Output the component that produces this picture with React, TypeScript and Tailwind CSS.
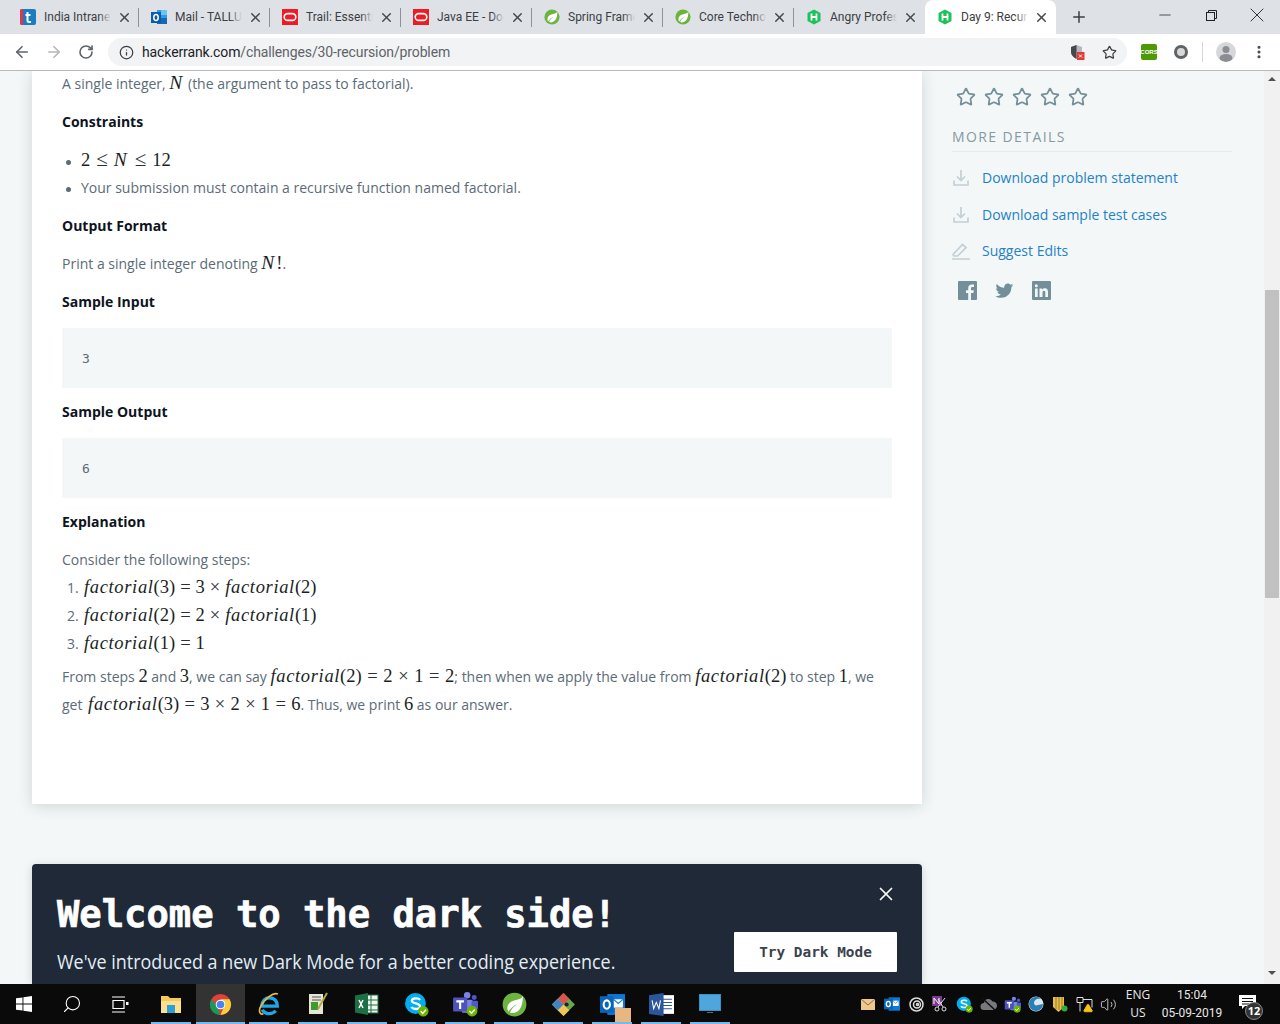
import React from "react";
import { ArrowLeft, ArrowRight, RotateCw, Info, Star, MoreVertical, Plus, X, Minus, Search, Volume2, AlertTriangle } from "lucide-react";

const Hex = ({ size = 16 }: { size?: number }) => (
  <svg width={size} height={size} viewBox="0 0 16 16">
    <path d="M8 0.5 14.5 4v8L8 15.5 1.5 12V4z" fill="#1ec25c" />
    <path d="M5.5 4.5v7M10.5 4.5v7M5.5 8h5" stroke="#fff" strokeWidth="1.8" fill="none" />
  </svg>
);
const Oracle = () => (
  <svg width="16" height="16" viewBox="0 0 16 16">
    <rect width="16" height="16" fill="#ed1c24" />
    <rect x="2.2" y="4.6" width="11.6" height="6.8" rx="3.4" fill="none" stroke="#fff" strokeWidth="1.6" />
  </svg>
);
const SpringIcon = ({ size = 16 }: { size?: number }) => (
  <svg width={size} height={size} viewBox="0 0 16 16">
    <circle cx="8" cy="8" r="7.6" fill="#6db33f" />
    <path d="M13.4 2.600C12 5.500 8 4.500 5 6.800 2.800 8.800 3.200 11.200 4.200 12.600c1.200-2.300 3.300-4 5.800-5-2.400 1.400-4 3.200-4.900 5.500 3.400 1.200 8.300-.6 8.300-10.500z" fill="#fff" />
  </svg>
);
const TIcon = () => (
  <svg width="16" height="16" viewBox="0 0 16 16">
    <rect width="16" height="16" rx="2" fill="#1b7cc0" />
    <path d="M0 2a2 2 0 0 1 2-2h1v16H2a2 2 0 0 1-2-2z" fill="#e0344f" />
    <path d="M7.5 3v8.5q0 1.5 1.5 1.5h2M5.5 6h5" stroke="#fff" strokeWidth="2" fill="none" />
  </svg>
);
const OutlookIcon = ({ size = 16 }: { size?: number }) => (
  <svg width={size} height={size} viewBox="0 0 16 16">
    <rect x="6" y="1" width="10" height="11" fill="#2e9be6" />
    <rect x="10" y="1" width="6" height="5" fill="#6fc3f2" />
    <rect x="6" y="9" width="10" height="6" fill="#1668b5" />
    <rect x="0" y="3" width="10" height="11" fill="#0a5cab" />
    <ellipse cx="5" cy="8.5" rx="2.2" ry="3" fill="none" stroke="#fff" strokeWidth="1.5" />
  </svg>
);

const tabs = [
  { t: "India Intranet", i: <TIcon /> },
  { t: "Mail - TALLURI", i: <OutlookIcon /> },
  { t: "Trail: Essential", i: <Oracle /> },
  { t: "Java EE - Docs", i: <Oracle /> },
  { t: "Spring Framework", i: <SpringIcon /> },
  { t: "Core Technologies", i: <SpringIcon /> },
  { t: "Angry Professor", i: <Hex /> },
];

function Tab({ t, i, active, sep }: { t: string; i: React.ReactNode; active?: boolean; sep?: boolean }) {
  return (
    <div className={`relative flex h-[34px] w-[131px] shrink-0 items-center pl-[12px] ${active ? "rounded-t-lg bg-white" : ""}`}>
      <div className="flex h-4 w-4 shrink-0 items-center justify-center">{i}</div>
      <div className="relative ml-2 w-[67px] overflow-hidden whitespace-nowrap text-[12px] text-[#3c4043]">
        {t}
        <div className={`absolute inset-y-0 right-0 w-[12px] bg-gradient-to-r from-transparent ${active ? "to-white" : "to-[#dee1e6]"}`} />
      </div>
      <X size={15} strokeWidth={2.3} className="ml-[5.500px] shrink-0 text-[#45484c]" />
      {sep && <div className="absolute right-0 top-[8px] h-[19px] w-px bg-[#8e9196]" />}
    </div>
  );
}

function TabBar() {
  return (
    <div className="flex h-[34px] items-center bg-[#dee1e6] pl-[8px] font-['Roboto']">
      {tabs.map((x, n) => (
        <Tab key={x.t} t={x.t} i={x.i} sep={n < 6} />
      ))}
      <Tab t="Day 9: Recursion" i={<Hex />} active />
      <Plus size={18} strokeWidth={2} className="ml-[14px] text-[#3c4043]" />
      <div className="ml-auto flex h-[34px] items-start text-[#202124]">
        <div className="flex h-[30px] w-[46px] items-center justify-center"><Minus size={18} strokeWidth={1} /></div>
        <div className="flex h-[30px] w-[46px] items-center justify-center">
          <svg width="11" height="11" viewBox="0 0 11 11" fill="none" stroke="#202124"><rect x="0.5" y="2.5" width="8" height="8" /><path d="M2.5 2.5v-2h8v8h-2" /></svg>
        </div>
        <div className="flex h-[30px] w-[46px] items-center justify-center"><X size={24} strokeWidth={0.9} /></div>
      </div>
    </div>
  );
}

function ToolBar() {
  return (
    <div className="flex h-[37px] items-center border-b border-[#b8b9ba] bg-white">
      <div className="flex w-[108px] shrink-0 items-center pl-[13px] text-[#5f6368]">
        <ArrowLeft size={18} strokeWidth={2.2} />
        <ArrowRight size={18} strokeWidth={2.2} className="ml-[14px] text-[#b4b6b9]" />
        <RotateCw size={16} strokeWidth={2.4} className="ml-[15px]" />
      </div>
      <div className="flex h-[28px] w-[1019px] shrink-0 items-center rounded-full bg-[#f1f3f4] pl-[11px] pr-[10px]">
        <Info size={15} strokeWidth={2} className="text-[#3c4043]" />
        <div className="ml-[8px] mt-px font-['Roboto'] text-[14px] tracking-[-0.12px] text-[#5f6368]">
          <span className="text-[#202124]">hackerrank.com</span>/challenges/30-recursion/problem
        </div>
        <svg className="ml-auto" width="15" height="16" viewBox="0 0 15 16">
          <path d="M6.5 1 12 3v5c0 3-2.5 5.5-5.5 7C3.500 13.500 1 11 1 8V3z" fill="#b5b7ba" />
          <path d="M6.5 1v14C3.500 13.500 1 11 1 8V3z" fill="#45484c" />
          <rect x="7" y="8" width="7.500" height="8" fill="#e53935" />
          <path d="M9 10.500l3 3M12 10.500l-3 3" stroke="#fff" strokeWidth="1" />
        </svg>
        <Star size={15} strokeWidth={2} className="ml-[17px] text-[#3c4043]" />
      </div>
      <div className="ml-[14px] flex h-[16px] w-[16px] items-center justify-center rounded-[2px] bg-[#4d9a06] font-['Liberation_Sans'] text-[6px] font-bold text-white">CORS</div>
      <div className="ml-[17px] flex h-[14px] w-[14px] items-center justify-center rounded-full border-[3px] border-[#5f6368] bg-[#d8d8d8]" />
      <div className="ml-[14px] h-[20px] w-px bg-[#d5d7da]" />
      <div className="ml-[13px] flex h-[20px] w-[20px] items-end justify-center overflow-hidden rounded-full bg-[#d5d7da]">
        <svg width="20" height="20" viewBox="0 0 20 20"><circle cx="10" cy="7.500" r="3.500" fill="#8a8d91" /><ellipse cx="10" cy="16" rx="6.500" ry="4" fill="#8a8d91" /></svg>
      </div>
      <MoreVertical size={16} strokeWidth={2.6} className="ml-[15px] text-[#45484c]" />
    </div>
  );
}

const Fn = ({ children }: { children: React.ReactNode }) => (
  <span className="font-['Liberation_Serif'] text-[18.500px] italic leading-none tracking-[0.65px] text-[#1a1f25]">{children}</span>
);
const BigN = () => (
  <span className="font-['Liberation_Serif'] text-[19.500px] italic leading-none tracking-[2px] text-[#1a1f25]">N</span>
);
const Rm = ({ children }: { children: React.ReactNode }) => (
  <span className="font-['Liberation_Serif'] text-[18.500px] leading-none text-[#1a1f25]">{children}</span>
);
const Op = ({ children }: { children: React.ReactNode }) => (
  <span className="mx-[5px] font-['Liberation_Serif'] text-[18.500px] leading-none text-[#2a3037]">{children}</span>
);
const OpW = ({ children }: { children: React.ReactNode }) => (
  <span className="mx-[5.600px] font-['Liberation_Serif'] text-[18.500px] leading-none text-[#2a3037]">{children}</span>
);
const OpN = ({ children }: { children: React.ReactNode }) => (
  <span className="mx-[5.300px] font-['Liberation_Serif'] text-[18.500px] leading-none text-[#2a3037]">{children}</span>
);
const Le = () => (
  <span className="mx-[6px] font-['Liberation_Serif'] text-[21px] leading-none text-[#2a3037]">≤</span>
);
const Call = ({ n }: { n: string }) => (
  <>
    <Fn>factorial</Fn>
    <Rm>({n})</Rm>
  </>
);

const Head = ({ children, cls }: { children: React.ReactNode; cls: string }) => (
  <div className={`h-[28px] pt-px text-[14px] font-bold leading-[26px] text-[#0e141e] ${cls}`}>{children}</div>
);
const Code = ({ children }: { children: React.ReactNode }) => (
  <div className="mt-[12px] flex h-[60px] items-center bg-[#f3f7f7] pl-[20px] pt-[2px] font-['DejaVu_Sans_Mono'] text-[13px] text-[#5b6b78]">{children}</div>
);
const Bullet = () => (
  <span className="ml-[4px] mr-[10px] inline-block h-[5px] w-[5px] rounded-full bg-[#5b6b78] align-middle" />
);
const Num = ({ children }: { children: React.ReactNode }) => (
  <span className="inline-block w-[17px]">{children}</span>
);

function Card() {
  return (
    <div className="h-[733px] w-[890px] shrink-0 bg-white px-[30px] font-['Open_Sans'] text-[14px] text-[#5b6b78] shadow-[0_2px_14px_rgba(20,40,50,0.16)]">
      <div className="h-[26px] whitespace-pre leading-[25px]">
        A single integer, <BigN /> (the argument to pass to factorial).
      </div>
      <Head cls="mt-[11px]">Constraints</Head>
      <ul className="mt-[10px]">
        <li className="h-[28px] whitespace-pre pt-px leading-[28px]">
          <Bullet /><Rm>2</Rm><Le /><BigN /><Le /><Rm>12</Rm>
        </li>
        <li className="h-[28px] pt-px leading-[26px]">
          <Bullet />Your submission must contain a recursive function named factorial.
        </li>
      </ul>
      <Head cls="mt-[10px]">Output Format</Head>
      <div className="mt-[10px] h-[28px] whitespace-pre pt-px leading-[26px]">
        Print a single integer denoting <BigN /><Rm>!</Rm>.
      </div>
      <Head cls="mt-[10px]">Sample Input</Head>
      <Code>3</Code>
      <Head cls="mt-[10px]">Sample Output</Head>
      <Code>6</Code>
      <Head cls="mt-[10px]">Explanation</Head>
      <div className="mt-[10px] h-[28px] pt-px leading-[26px]">Consider the following steps:</div>
      <ol>
        <li className="h-[28px] whitespace-pre pl-[5px] leading-[28px]">
          <Num>1.</Num><Call n="3" /><Op>=</Op><Rm>3</Rm><Op>×</Op><Call n="2" />
        </li>
        <li className="h-[28px] whitespace-pre pl-[5px] leading-[28px]">
          <Num>2.</Num><Call n="2" /><Op>=</Op><Rm>2</Rm><Op>×</Op><Call n="1" />
        </li>
        <li className="h-[28px] whitespace-pre pl-[5px] leading-[28px]">
          <Num>3.</Num><Call n="1" /><Op>=</Op><Rm>1</Rm>
        </li>
      </ol>
      <div className="mt-[5px] h-[28px] whitespace-pre pt-px leading-[26px]">
        From steps <Rm>2</Rm> and <Rm>3</Rm>, we can say <Call n="2" /><OpW>=</OpW><Rm>2</Rm><OpW>×</OpW><Rm>1</Rm><OpW>=</OpW><Rm>2</Rm>; then when we apply the value from <Call n="2" /> to step <Rm>1</Rm>, we
      </div>
      <div className="h-[28px] whitespace-pre pt-px leading-[26px]">
        get <span className="ml-[2px]"><Call n="3" /></span><OpN>=</OpN><Rm>3</Rm><OpN>×</OpN><Rm>2</Rm><OpN>×</OpN><Rm>1</Rm><OpN>=</OpN><Rm>6</Rm>. Thus, we print <Rm>6</Rm> as our answer.
      </div>
    </div>
  );
}

const DownloadIcon = () => (
  <svg width="18" height="18" viewBox="0 0 18 18" fill="none" stroke="#c3d0d5" strokeWidth="1.700">
    <path d="M9 1v10M5 7.500l4 4 4-4M2 11.500v4.500h14v-4.500" />
  </svg>
);

function Side() {
  const link = "ml-[12px] pb-[2px] text-[14px] text-[#1f82c9]";
  return (
    <div className="ml-[30px] w-[280px] shrink-0 pt-[16px] font-['Open_Sans']">
      <div className="flex h-[20px] gap-[8px] pl-[3.500px]">
        {[0, 1, 2, 3, 4].map((n) => (
          <Star key={n} size={20} strokeWidth={2.1} className="text-[#738f99]" />
        ))}
      </div>
      <div className="mt-[20px] border-b border-[#e6ecee] pb-[4px] text-[14px] leading-[20px] tracking-[1.4px] text-[#8799a3]">MORE DETAILS</div>
      <div className="mt-[16px] flex h-[20px] items-center"><DownloadIcon /><span className={link}>Download problem statement</span></div>
      <div className="mt-[17px] flex h-[20px] items-center"><DownloadIcon /><span className={link}>Download sample test cases</span></div>
      <div className="mt-[16px] flex h-[20px] items-center">
        <svg width="18" height="18" viewBox="0 0 18 18" fill="none" stroke="#c3d0d5" strokeWidth="1.700"><path d="M1 12.500 10.500 2.500l3.500 3-8.500 8.500H2zM0 17h18" /></svg>
        <span className={link}>Suggest Edits</span>
      </div>
      <div className="mt-[19px] flex h-[20px] items-center gap-[18px] pl-[6px]">
        <svg width="19" height="19" viewBox="0 0 19 19"><rect width="19" height="19" rx="1" fill="#738f99" /><path d="M13 19v-7h2.400l.4-2.800H13V7.500c0-.9.300-1.400 1.500-1.400H16V3.600c-.4 0-1.200-.1-2.100-.1-2.200 0-3.700 1.300-3.700 3.700v2H8V12h2.200v7z" fill="#f3f7f7" /></svg>
        <svg width="19" height="19" viewBox="0 0 24 24"><path d="M23 5.300c-.8.400-1.700.6-2.600.7.900-.6 1.700-1.400 2-2.500-.9.500-1.900.9-2.900 1.100C18.700 3.700 17.500 3 16.200 3c-2.500 0-4.600 2.100-4.600 4.600 0 .4 0 .7.100 1C7.900 8.400 4.500 6.600 2.200 3.800c-.4.700-.6 1.500-.6 2.300 0 1.600.8 3 2 3.800-.7 0-1.400-.2-2.100-.6v.1c0 2.200 1.600 4.100 3.700 4.500-.7.200-1.400.2-2.100.1.600 1.800 2.300 3.200 4.300 3.200-1.600 1.200-3.600 2-5.700 2H.5c2 1.300 4.500 2.100 7.100 2.100 8.500 0 13.100-7 13.100-13.100v-.6c.9-.6 1.700-1.400 2.300-2.300z" fill="#738f99" /></svg>
        <svg width="19" height="19" viewBox="0 0 19 19"><rect width="19" height="19" rx="1" fill="#738f99" /><path d="M3 7.500h2.700V16H3zM4.300 3.200a1.500 1.500 0 1 1 0 3.100 1.500 1.500 0 0 1 0-3.100zM7.500 7.500h2.600v1.200c.4-.7 1.300-1.400 2.600-1.400 2.800 0 3.300 1.800 3.300 4.200V16h-2.700v-4c0-1 0-2.200-1.300-2.200s-1.500 1-1.500 2.100V16H7.500z" fill="#f3f7f7" /></svg>
      </div>
    </div>
  );
}

function Banner() {
  return (
    <div className="relative mt-[60px] flex h-[160px] w-[890px] justify-between rounded-t-[4px] bg-[#1f2937] pl-[25px] pr-[25px] shadow-[0_2px_10px_rgba(0,0,0,0.15)]">
      <div className="pt-[26px]">
        <div className="font-['DejaVu_Sans_Mono'] text-[37.150px] font-bold leading-[50px] text-white [-webkit-text-stroke:0.7px_white]">Welcome to the dark side!</div>
        <div className="mt-[8px] origin-left scale-x-[0.897] whitespace-nowrap font-['Open_Sans'] text-[20px] leading-[28px] text-[#e3edf5]">We've introduced a new Dark Mode for a better coding experience.</div>
      </div>
      <div className="pt-[68px]">
        <div className="flex h-[40px] w-[163px] items-center justify-center rounded-[1px] bg-white pt-[2px] font-['DejaVu_Sans_Mono'] text-[14.400px] font-bold text-[#39424e]">Try Dark Mode</div>
      </div>
      <X size={22} strokeWidth={1.9} className="absolute right-[25px] top-[19px] text-white" />
    </div>
  );
}

function Scrollbar() {
  return (
    <div className="ml-auto flex h-full w-[16px] shrink-0 flex-col items-center bg-[#f1f1f1]">
      <div className="mt-[6px] h-0 w-0 border-x-[4px] border-b-[4px] border-x-transparent border-b-[#505050]" />
      <div className="mt-[209px] h-[308px] w-[14px] bg-[#c1c1c1]" />
      <div className="mt-[373px] h-0 w-0 border-x-[4px] border-t-[4px] border-x-transparent border-t-[#505050]" />
    </div>
  );
}

const Slot = ({ children, run, active, w = "w-[49px]" }: { children: React.ReactNode; run?: boolean; active?: boolean; w?: string }) => (
  <div className={`relative flex h-[40px] shrink-0 items-center justify-center ${w} ${active ? "bg-[#333333]" : ""}`}>
    {children}
    {run && <div className={`absolute bottom-0 h-[2px] bg-[#76b9ed] ${active ? "inset-x-0" : "inset-x-[4.500px]"}`} />}
  </div>
);

const TrayOutlook = ({ size }: { size: number }) => (
  <svg width={size} height={size} viewBox="0 0 24 24">
    <rect x="7" y="2" width="17" height="20" fill="#0f78d4" />
    <rect x="13" y="7" width="9" height="8" fill="#fff" />
    <path d="M13 7l4.500 4L22 7" stroke="#0f78d4" fill="none" />
    <rect x="0" y="4" width="13" height="16" fill="#0a64b8" />
    <ellipse cx="6.500" cy="12" rx="3" ry="4" fill="none" stroke="#fff" strokeWidth="2" />
  </svg>
);
const SkypeIcon = ({ size }: { size: number }) => (
  <svg width={size} height={size} viewBox="0 0 24 24">
    <circle cx="11" cy="11" r="10" fill="#00aff0" />
    <path d="M15.500 7.500C14 5.500 7.500 5.500 7.500 8.500c0 3.500 8 1.500 8 5.500 0 3-6.500 3-8.500.5" stroke="#fff" strokeWidth="2.200" fill="none" />
    <circle cx="18.500" cy="18.500" r="5" fill="#6bb700" />
    <path d="M16 18.500l2 2 3-3.500" stroke="#fff" strokeWidth="1.400" fill="none" />
  </svg>
);
const TeamsIcon = ({ size }: { size: number }) => (
  <svg width={size} height={size} viewBox="0 0 24 24">
    <circle cx="14" cy="4" r="3" fill="#7b83eb" />
    <circle cx="20.500" cy="6" r="2.300" fill="#5059c9" />
    <rect x="9" y="8" width="10" height="12" rx="1" fill="#7b83eb" />
    <rect x="18" y="9" width="6" height="8" rx="1" fill="#5059c9" />
    <rect x="1" y="6" width="13" height="13" rx="1" fill="#4b53bc" />
    <path d="M4 9.500h7M7.500 9.500v7" stroke="#fff" strokeWidth="2" />
    <circle cx="18.500" cy="18.500" r="5" fill="#6bb700" />
    <path d="M16 18.500l2 2 3-3.500" stroke="#fff" strokeWidth="1.400" fill="none" />
  </svg>
);

function Taskbar() {
  return (
    <div className="flex h-[40px] items-center bg-[#0a0a0a]">
      <div className="flex h-[40px] w-[48px] items-center justify-center">
        <svg width="16" height="16" viewBox="0 0 16 16" fill="#fff"><path d="M0 2.300 6.500 1.400V7.500H0zM7.400 1.300 16 0v7.500H7.400zM0 8.400h6.500v6.200L0 13.700zM7.400 8.400H16V16l-8.600-1.200z" /></svg>
      </div>
      <div className="flex h-[40px] w-[48px] items-center justify-center"><Search size={20} strokeWidth={1.300} className="-scale-x-100 text-white" /></div>
      <div className="flex h-[40px] w-[48px] items-center justify-center">
        <svg width="17" height="17" viewBox="0 0 17 17" fill="none" stroke="#fff" strokeWidth="1.200"><path d="M0 1h13M0 16h13M1 4.500h11v8H1z" /><rect x="14" y="6" width="2.500" height="3" fill="#fff" stroke="none" /></svg>
      </div>
      <div className="w-[2.500px]" />
      <Slot run>
        <svg width="22" height="22" viewBox="0 0 22 22"><path d="M1 3h7l2 2h11v15H1z" fill="#f5c95a" /><rect x="1" y="8" width="20" height="12" fill="#fbe18f" /><rect x="7" y="12" width="8" height="8" fill="#2b9fd8" /></svg>
      </Slot>
      <Slot run active>
        <svg width="23" height="23" viewBox="0 0 24 24">
          <circle cx="12" cy="12" r="11" fill="#db4437" />
          <path d="M12 23A11 11 0 0 1 2.500 6.500L8 14z" fill="#0f9d58" />
          <path d="M12 23a11 11 0 0 0 9.500-16.500H12l4 7z" fill="#ffcd40" />
          <circle cx="12" cy="12" r="5" fill="#fff" /><circle cx="12" cy="12" r="4" fill="#4285f4" />
        </svg>
      </Slot>
      <Slot run>
        <svg width="25" height="25" viewBox="0 0 24 24" fill="none">
          <path d="M4.500 13.500h15c.3-4.500-3-8-7.500-8-4 0-7 3-7.500 8zM5 17c2 4 9 5.500 13 1" stroke="#1ea7e8" strokeWidth="3.200" />
          <path d="M20 2C16 0 7 6 3 15c-1.500 4 0 7 3 6" stroke="#f2b632" strokeWidth="1.600" />
        </svg>
      </Slot>
      <Slot run>
        <svg width="22" height="24" viewBox="0 0 22 24"><path d="M2 2h14v20H2z" fill="#e6e6d8" /><rect x="4" y="10" width="7" height="8" fill="#3f9b2f" /><path d="M5 5h9M5 8h9" stroke="#555" /><path d="M11 17 20 1" stroke="#b5a642" strokeWidth="2" /></svg>
      </Slot>
      <Slot run>
        <svg width="24" height="24" viewBox="0 0 24 24"><rect x="10" y="3" width="13" height="18" fill="#eef5ee" stroke="#1d7044" /><path d="M10 8h13M10 13h13M10 18h13M16 3v18" stroke="#1d7044" /><path d="M0 3.500 13 1v22L0 20.500z" fill="#1d7044" /><path d="M4 8l4 8M8 8l-4 8" stroke="#fff" strokeWidth="1.500" /></svg>
      </Slot>
      <Slot run><SkypeIcon size={25} /></Slot>
      <Slot run><TeamsIcon size={26} /></Slot>
      <Slot run><SpringIcon size={25} /></Slot>
      <Slot run>
        <svg width="25" height="25" viewBox="0 0 24 24"><path d="M12 1 23 12 12 23 1 12z" fill="#6aa84f" /><path d="M12 23 1 12l5.500-5.500L17.500 17.500z" fill="#f0c555" /><path d="M6.500 6.500 1 12l5.500 5.500L12 12z" fill="#3d85c6" /><path d="M12 1 6.500 6.500 12 12l5.500-5.500z" fill="#d9534f" /><circle cx="15" cy="12" r="2" fill="#222" /></svg>
      </Slot>
      <Slot run>
        <div className="relative"><TrayOutlook size={25} /><div className="absolute -bottom-[5px] -right-[6px] h-[14px] w-[16px] bg-[#e8b681]" /></div>
      </Slot>
      <Slot run>
        <svg width="25" height="25" viewBox="0 0 24 24"><rect x="11" y="3" width="13" height="18" fill="#fff" /><path d="M13 7h9M13 10h9M13 13h9M13 16h9" stroke="#2b579a" /><path d="M0 3 14 1v22L0 21z" fill="#2b579a" /><path d="M3 8l1.500 8L7 10l2.500 6L11 8" stroke="#fff" fill="none" /></svg>
      </Slot>
      <Slot run>
        <svg width="22" height="20" viewBox="0 0 22 20"><rect width="22" height="17" fill="#3d8fc7" /><rect x="1" y="1" width="20" height="15" fill="#4ea6dd" /><rect x="8" y="18" width="6" height="1" fill="#666" /></svg>
      </Slot>

      <div className="ml-auto flex h-[40px] items-center pr-[13px]">
        <Slot w="w-[24px]"><svg width="14" height="11" viewBox="0 0 14 11"><rect width="14" height="11" fill="#efc88e" /><path d="M0 0l7 6 7-6" stroke="#8a6c3c" fill="none" /></svg></Slot>
        <Slot w="w-[24px]"><TrayOutlook size={16} /></Slot>
        <Slot w="w-[24px]"><svg width="15" height="15" viewBox="0 0 15 15" fill="none" stroke="#ddd" strokeWidth="1.500"><circle cx="7.500" cy="7.500" r="6.500" /><circle cx="8" cy="7.500" r="3.500" /><circle cx="8.500" cy="7.500" r="1" /></svg></Slot>
        <Slot w="w-[24px]"><svg width="16" height="16" viewBox="0 0 16 16"><rect width="10" height="10" fill="#7a3b8f" /><path d="M2 8V2l5 6V2" stroke="#fff" fill="none" /><circle cx="5" cy="13" r="2" fill="none" stroke="#ddd" /><circle cx="12" cy="13" r="2" fill="none" stroke="#ddd" /><path d="M6 11 13 2M11 11 6 3" stroke="#ddd" /></svg></Slot>
        <Slot w="w-[24px]"><SkypeIcon size={17} /></Slot>
        <Slot w="w-[24px]"><svg width="17" height="14" viewBox="0 0 17 14"><path d="M4 13a3.500 3.500 0 0 1 0-7 4.500 4.500 0 0 1 8.500-1.500A4 4 0 0 1 13 13z" fill="#77797c" /><path d="M2 1l13 12" stroke="#111" strokeWidth="1.500" /></svg></Slot>
        <Slot w="w-[24px]"><TeamsIcon size={17} /></Slot>
        <Slot w="w-[24px]"><svg width="16" height="16" viewBox="0 0 16 16"><circle cx="8" cy="8" r="7.500" fill="#d9e7ef" /><path d="M1 8a7 7 0 0 1 12-5c-4-1-7 1-7 4 0 2 2 3 4 2 2 0 3-1 5-1a7 7 0 0 1-14 0z" fill="#2a7fb5" /></svg></Slot>
        <Slot w="w-[24px]"><svg width="16" height="17" viewBox="0 0 16 17"><path d="M1 1h11v10l-5.500 5L1 11z" fill="#e7c04a" /><path d="M4 1v12M7 1v13M10 1v11" stroke="#9a7a22" /><circle cx="12.500" cy="12.500" r="3" fill="#2fae3c" /></svg></Slot>
        <Slot w="w-[24px]"><div className="relative"><svg width="17" height="15" viewBox="0 0 17 15" fill="none" stroke="#ddd"><path d="M1 .5h6v5H1zM7 2.500h9v8M4 5.500v9" /></svg><AlertTriangle size={10} className="absolute -bottom-px right-0 fill-[#f5c518] text-[#f5c518]" /></div></Slot>
        <Slot w="w-[24px]"><Volume2 size={17} strokeWidth={1.200} className="text-[#ddd]" /></Slot>
        <div className="flex h-[40px] w-[36px] flex-col items-center justify-center font-['Open_Sans'] text-[12px] leading-[18px] text-[#e8e8e8]">
          <div>ENG</div><div>US</div>
        </div>
        <div className="ml-px flex h-[40px] w-[70px] flex-col items-center justify-center font-['Roboto'] text-[12px] leading-[18px] text-[#e8e8e8]">
          <div>15:04</div><div>05-09-2019</div>
        </div>
        <div className="relative flex h-[40px] w-[40px] items-center justify-center">
          <svg width="17" height="15" viewBox="0 0 17 15" className="-translate-y-[2px]"><path d="M0 0h17v11H6l-3 3v-3H0z" fill="#fff" /><path d="M3 3.500h11M3 6.500h11M3 9h7" stroke="#111" /></svg>
          <div className="absolute left-[18px] top-[18px] flex h-[18px] w-[18px] items-center justify-center rounded-full border border-[#888] bg-[#333] font-['Open_Sans'] text-[11px] font-bold text-white">12</div>
        </div>
      </div>
    </div>
  );
}

export default function App() {
  return (
    <div className="flex h-[1024px] w-[1280px] flex-col overflow-hidden">
      <TabBar />
      <ToolBar />
      <div className="flex h-[913px] overflow-hidden bg-[#f3f7f7] pl-[32px]">
        <div className="flex w-[890px] shrink-0 flex-col">
          <Card />
          <Banner />
        </div>
        <Side />
        <Scrollbar />
      </div>
      <Taskbar />
    </div>
  );
}
